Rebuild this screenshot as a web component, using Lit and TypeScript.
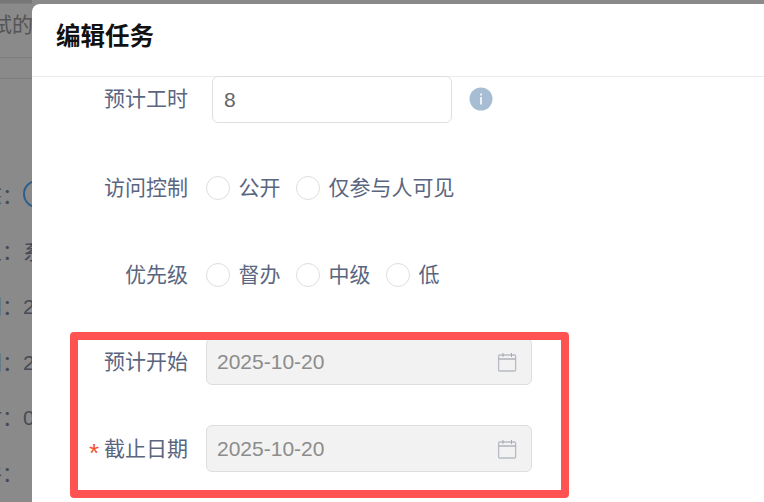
import {css, html, LitElement, svg, type TemplateResult} from 'lit';
import {customElement} from 'lit/decorators.js';

const calendarIcon = svg`<svg class="cal" width="20" height="20" viewBox="0 0 20 20" fill="none" stroke="#b9bcc6" stroke-width="1.3">
    <rect x="1.6" y="3" width="17" height="16" rx="1"></rect>
    <path d="M1.6 7h17" stroke="#a5a8b3"></path>
    <path d="M6 1v4M14.500 1v4" stroke="#a5a8b3" stroke-width="1"></path>
</svg>`;

const BEHIND_ROWS = ['态：', '人：系', '间：2', '间：2', '时：0', '件：'];

@customElement('app-root')
export class AppRoot extends LitElement {

    static styles = css`
        :host {
            display: block;
            width: 764px;
            height: 502px;
            overflow: hidden;
            position: relative;
            background: #8a8a8a;
            font-family: "Liberation Sans", "Noto Sans CJK SC", sans-serif;
        }
        .page {
            display: flex;
            height: 502px;
        }
        .behind {
            width: 32px;
            flex: none;
            overflow: hidden;
            color: #454a55;
            font-size: 21px;
            background: linear-gradient(#767676 0, #767676 3px, #8a8a8a 4px);
        }
        .crumb {
            white-space: nowrap;
            height: 57px;
            line-height: 50px;
            color: #555;
            margin-left: -9px;
            border-bottom: 1px solid #7e7e7e;
        }
        .rule {
            height: 20px;
            border-bottom: 1px solid #7e7e7e;
        }
        .behind-row {
            display: flex;
            align-items: center;
            height: 30px;
            white-space: nowrap;
            margin-bottom: 25.500px;
            margin-left: -19px;
        }
        .behind-rows {
            margin-top: 100px;
        }
        .ring {
            width: 24px;
            height: 24px;
            border: 2px solid #2c5f8f;
            border-radius: 50%;
            flex: none;
        }
        .modal {
            flex: 1;
            margin-top: 4px;
            background: #fff;
            border-radius: 8px 0 0 0;
            overflow: hidden;
        }
        .header {
            height: 73px;
            box-sizing: border-box;
            padding: 14px 24px 0;
            border-bottom: 1px solid #e8eaec;
            font-size: 24.500px;
            font-weight: 700;
            line-height: 38px;
            color: #111;
        }
        .row {
            display: flex;
            align-items: center;
            height: 47px;
            margin-bottom: 40px;
            color: #5a6680;
        }
        .row.first {
            align-items: flex-start;
            height: 46px;
            margin-bottom: 41px;
        }
        .label {
            width: 156px;
            flex: none;
            text-align: right;
            font-size: 21px;
            line-height: 44px;
            margin-right: 18px;
            white-space: nowrap;
        }
        .star {
            color: #f5532d;
            font-size: 26px;
            line-height: 20px;
            vertical-align: -6px;
            margin-right: 5px;
        }
        .input {
            box-sizing: border-box;
            width: 240px;
            height: 47px;
            margin: -1px 0 0 6px;
            border: 1px solid #dcdee2;
            border-radius: 6px;
            padding: 0 11px;
            font-size: 21px;
            line-height: 45px;
            color: #666;
        }
        .info {
            margin: 10px 0 0 17px;
            width: 24px;
            height: 24px;
            flex: none;
        }
        .radio-group {
            display: flex;
            align-items: center;
            font-size: 21px;
            line-height: 44px;
        }
        .radio {
            width: 24px;
            height: 24px;
            box-sizing: border-box;
            border: 1px solid #dcdee2;
            border-radius: 50%;
            margin-right: 8.500px;
            flex: none;
        }
        .radio-text {
            margin-right: 15.500px;
        }
        .date {
            box-sizing: border-box;
            display: flex;
            align-items: center;
            justify-content: space-between;
            width: 326px;
            height: 47px;
            background: #f2f2f2;
            border: 1px solid #dcdee2;
            border-radius: 6px;
            padding: 0 14px 0 10px;
            font-size: 21px;
            color: #8c8c8c;
        }
        .cal {
            display: block;
        }
        .highlight {
            position: absolute;
            left: 70px;
            top: 332px;
            width: 499px;
            height: 166px;
            box-sizing: border-box;
            border: 8px solid #ff5252;
            border-radius: 4px;
        }
    `;

    private renderRadios(options: string[]): TemplateResult {
        return html`<div class="radio-group">
            ${options.map(o => html`<span class="radio"></span><span class="radio-text">${o}</span>`)}
        </div>`;
    }

    private renderDate(label: string, required: boolean): TemplateResult {
        return html`<div class="row">
            <div class="label">${required ? html`<span class="star">*</span>` : ''}${label}</div>
            <div class="date"><span>2025-10-20</span>${calendarIcon}</div>
        </div>`;
    }

    render(): TemplateResult {
        return html`<div class="page">
            <div class="behind">
                <div class="crumb">试的任务</div>
                <div class="rule"></div>
                <div class="behind-rows">
                    ${BEHIND_ROWS.map((r, i) => html`<div class="behind-row">${r}${i === 0 ? html`<span class="ring"></span>` : ''}</div>`)}
                </div>
            </div>
            <div class="modal">
                <div class="header">编辑任务</div>
                <div class="row first">
                    <div class="label">预计工时</div>
                    <div class="input">8</div>
                    <svg class="info" viewBox="0 0 24 24">
                        <circle cx="12" cy="12" r="11.500" fill="#a7bdd4"></circle>
                        <rect x="11" y="10" width="2" height="7.500" fill="#fff" opacity="0.8"></rect>
                        <rect x="11" y="6.500" width="2" height="2" fill="#fff" opacity="0.8"></rect>
                    </svg>
                </div>
                <div class="row">
                    <div class="label">访问控制</div>
                    ${this.renderRadios(['公开', '仅参与人可见'])}
                </div>
                <div class="row">
                    <div class="label">优先级</div>
                    ${this.renderRadios(['督办', '中级', '低'])}
                </div>
                ${this.renderDate('预计开始', false)}
                ${this.renderDate('截止日期', true)}
            </div>
            <div class="highlight"></div>
        </div>`;
    }
}
